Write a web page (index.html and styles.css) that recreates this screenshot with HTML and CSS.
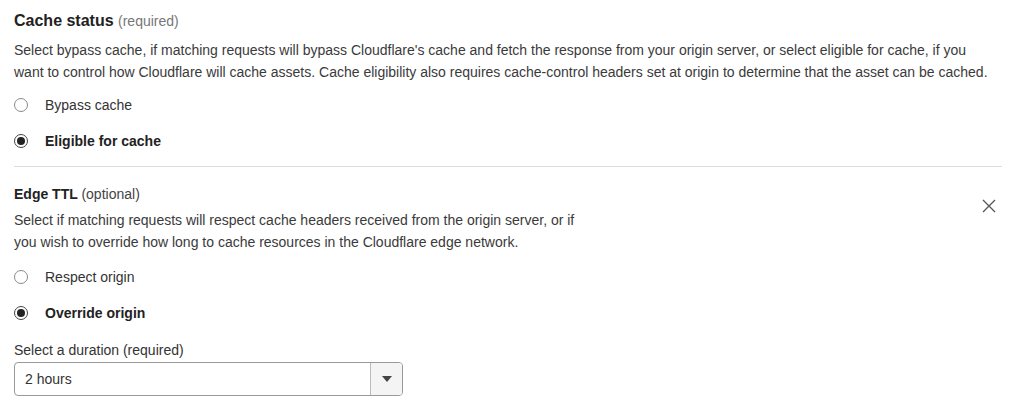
FILE: index.html
```html
<!DOCTYPE html>
<html lang="en">
<head>
  <meta charset="UTF-8">
  <meta name="viewport" content="width=device-width, initial-scale=1.0">
  <title>Cache settings</title>
  <link rel="stylesheet" href="styles.css">
</head>
<body>
  <div class="panel">
    <section class="field">
      <h2 class="field-title">Cache status <span class="hint">(required)</span></h2>
      <p class="desc desc-wide">Select bypass cache, if matching requests will bypass Cloudflare's cache and fetch the response from your origin server, or select eligible for cache, if you want to control how Cloudflare will cache assets. Cache eligibility also requires cache-control headers set at origin to determine that the asset can be cached.</p>
      <label class="radio"><span class="dot"></span>Bypass cache</label>
      <label class="radio checked"><span class="dot"></span>Eligible for cache</label>
    </section>

    <hr class="divider">

    <section class="field">
      <div class="field-head">
        <div>
          <h3 class="sub-title">Edge TTL <span class="hint-dark">(optional)</span></h3>
          <p class="desc desc-narrow">Select if matching requests will respect cache headers received from the origin server, or if you wish to override how long to cache resources in the Cloudflare edge network.</p>
        </div>
        <button class="close" aria-label="Remove">
          <svg width="14" height="14" viewBox="0 0 14 14"><path d="M1 1l12 12M13 1L1 13" stroke="#555" stroke-width="1.3" fill="none"/></svg>
        </button>
      </div>
      <label class="radio"><span class="dot"></span>Respect origin</label>
      <label class="radio checked"><span class="dot"></span>Override origin</label>

      <div class="select-label">Select a duration (required)</div>
      <div class="select">
        <span class="select-value">2 hours</span>
        <span class="select-arrow">
          <svg width="10" height="6" viewBox="0 0 10 6"><path d="M0 0h10L5 6z" fill="#444"/></svg>
        </span>
      </div>
    </section>
  </div>
</body>
</html>
```

FILE: styles.css
```css
body {
  margin: 0;
  background: #fff;
  font-family: "Liberation Sans", Arial, sans-serif;
  color: #36393a;
}
.panel {
  width: 988px;
  padding: 10px 22px 0 14px;
}
.field-title {
  margin: 0;
  font-size: 16px;
  font-weight: bold;
  color: #222;
  line-height: 22px;
}
.hint {
  font-size: 14px;
  font-weight: normal;
  color: #777;
}
.sub-title {
  margin: 0;
  font-size: 14px;
  font-weight: bold;
  color: #222;
  line-height: 20px;
}
.hint-dark {
  font-weight: normal;
  color: #444;
}
.desc {
  margin: 7px 0 0;
  font-size: 14px;
  line-height: 22px;
  color: #3a3a3a;
}
.desc-wide {
  max-width: 975px;
  margin-bottom: 1px;
}
.desc-narrow {
  width: 580px;
  margin: 5px 0 2px;
}
.radio {
  display: flex;
  align-items: center;
  height: 36px;
  font-size: 14px;
  color: #333;
}
.radio:first-of-type {
  margin-top: 4px;
}
.radio.checked {
  font-weight: bold;
  color: #222;
}
.dot {
  width: 14px;
  height: 14px;
  border: 1px solid #8a8a8a;
  border-radius: 50%;
  margin-right: 17px;
  box-sizing: border-box;
  display: flex;
  align-items: center;
  justify-content: center;
}
.checked .dot {
  border-color: #444;
}
.checked .dot::after {
  content: "";
  width: 8px;
  height: 8px;
  border-radius: 50%;
  background: #222;
}
.divider {
  border: none;
  border-top: 1px solid #ddd;
  margin: 7px 0 17px;
}
.field-head {
  display: flex;
  justify-content: space-between;
  align-items: flex-start;
}
.close {
  background: none;
  border: none;
  padding: 0;
  margin-top: 15px;
  margin-right: 6px;
  cursor: pointer;
}
.select-label {
  margin-top: 9px;
  font-size: 14px;
  line-height: 20px;
  color: #333;
}
.select {
  margin-top: 2px;
  width: 389px;
  height: 34px;
  box-sizing: border-box;
  border: 1px solid #999;
  border-radius: 4px;
  display: flex;
  align-items: center;
  justify-content: space-between;
  overflow: hidden;
}
.select-value {
  padding-left: 10px;
  font-size: 14px;
  color: #333;
}
.select-arrow {
  width: 31px;
  height: 100%;
  border-left: 1px solid #bbb;
  background: #f4f4f4;
  display: flex;
  align-items: center;
  justify-content: center;
}
```
